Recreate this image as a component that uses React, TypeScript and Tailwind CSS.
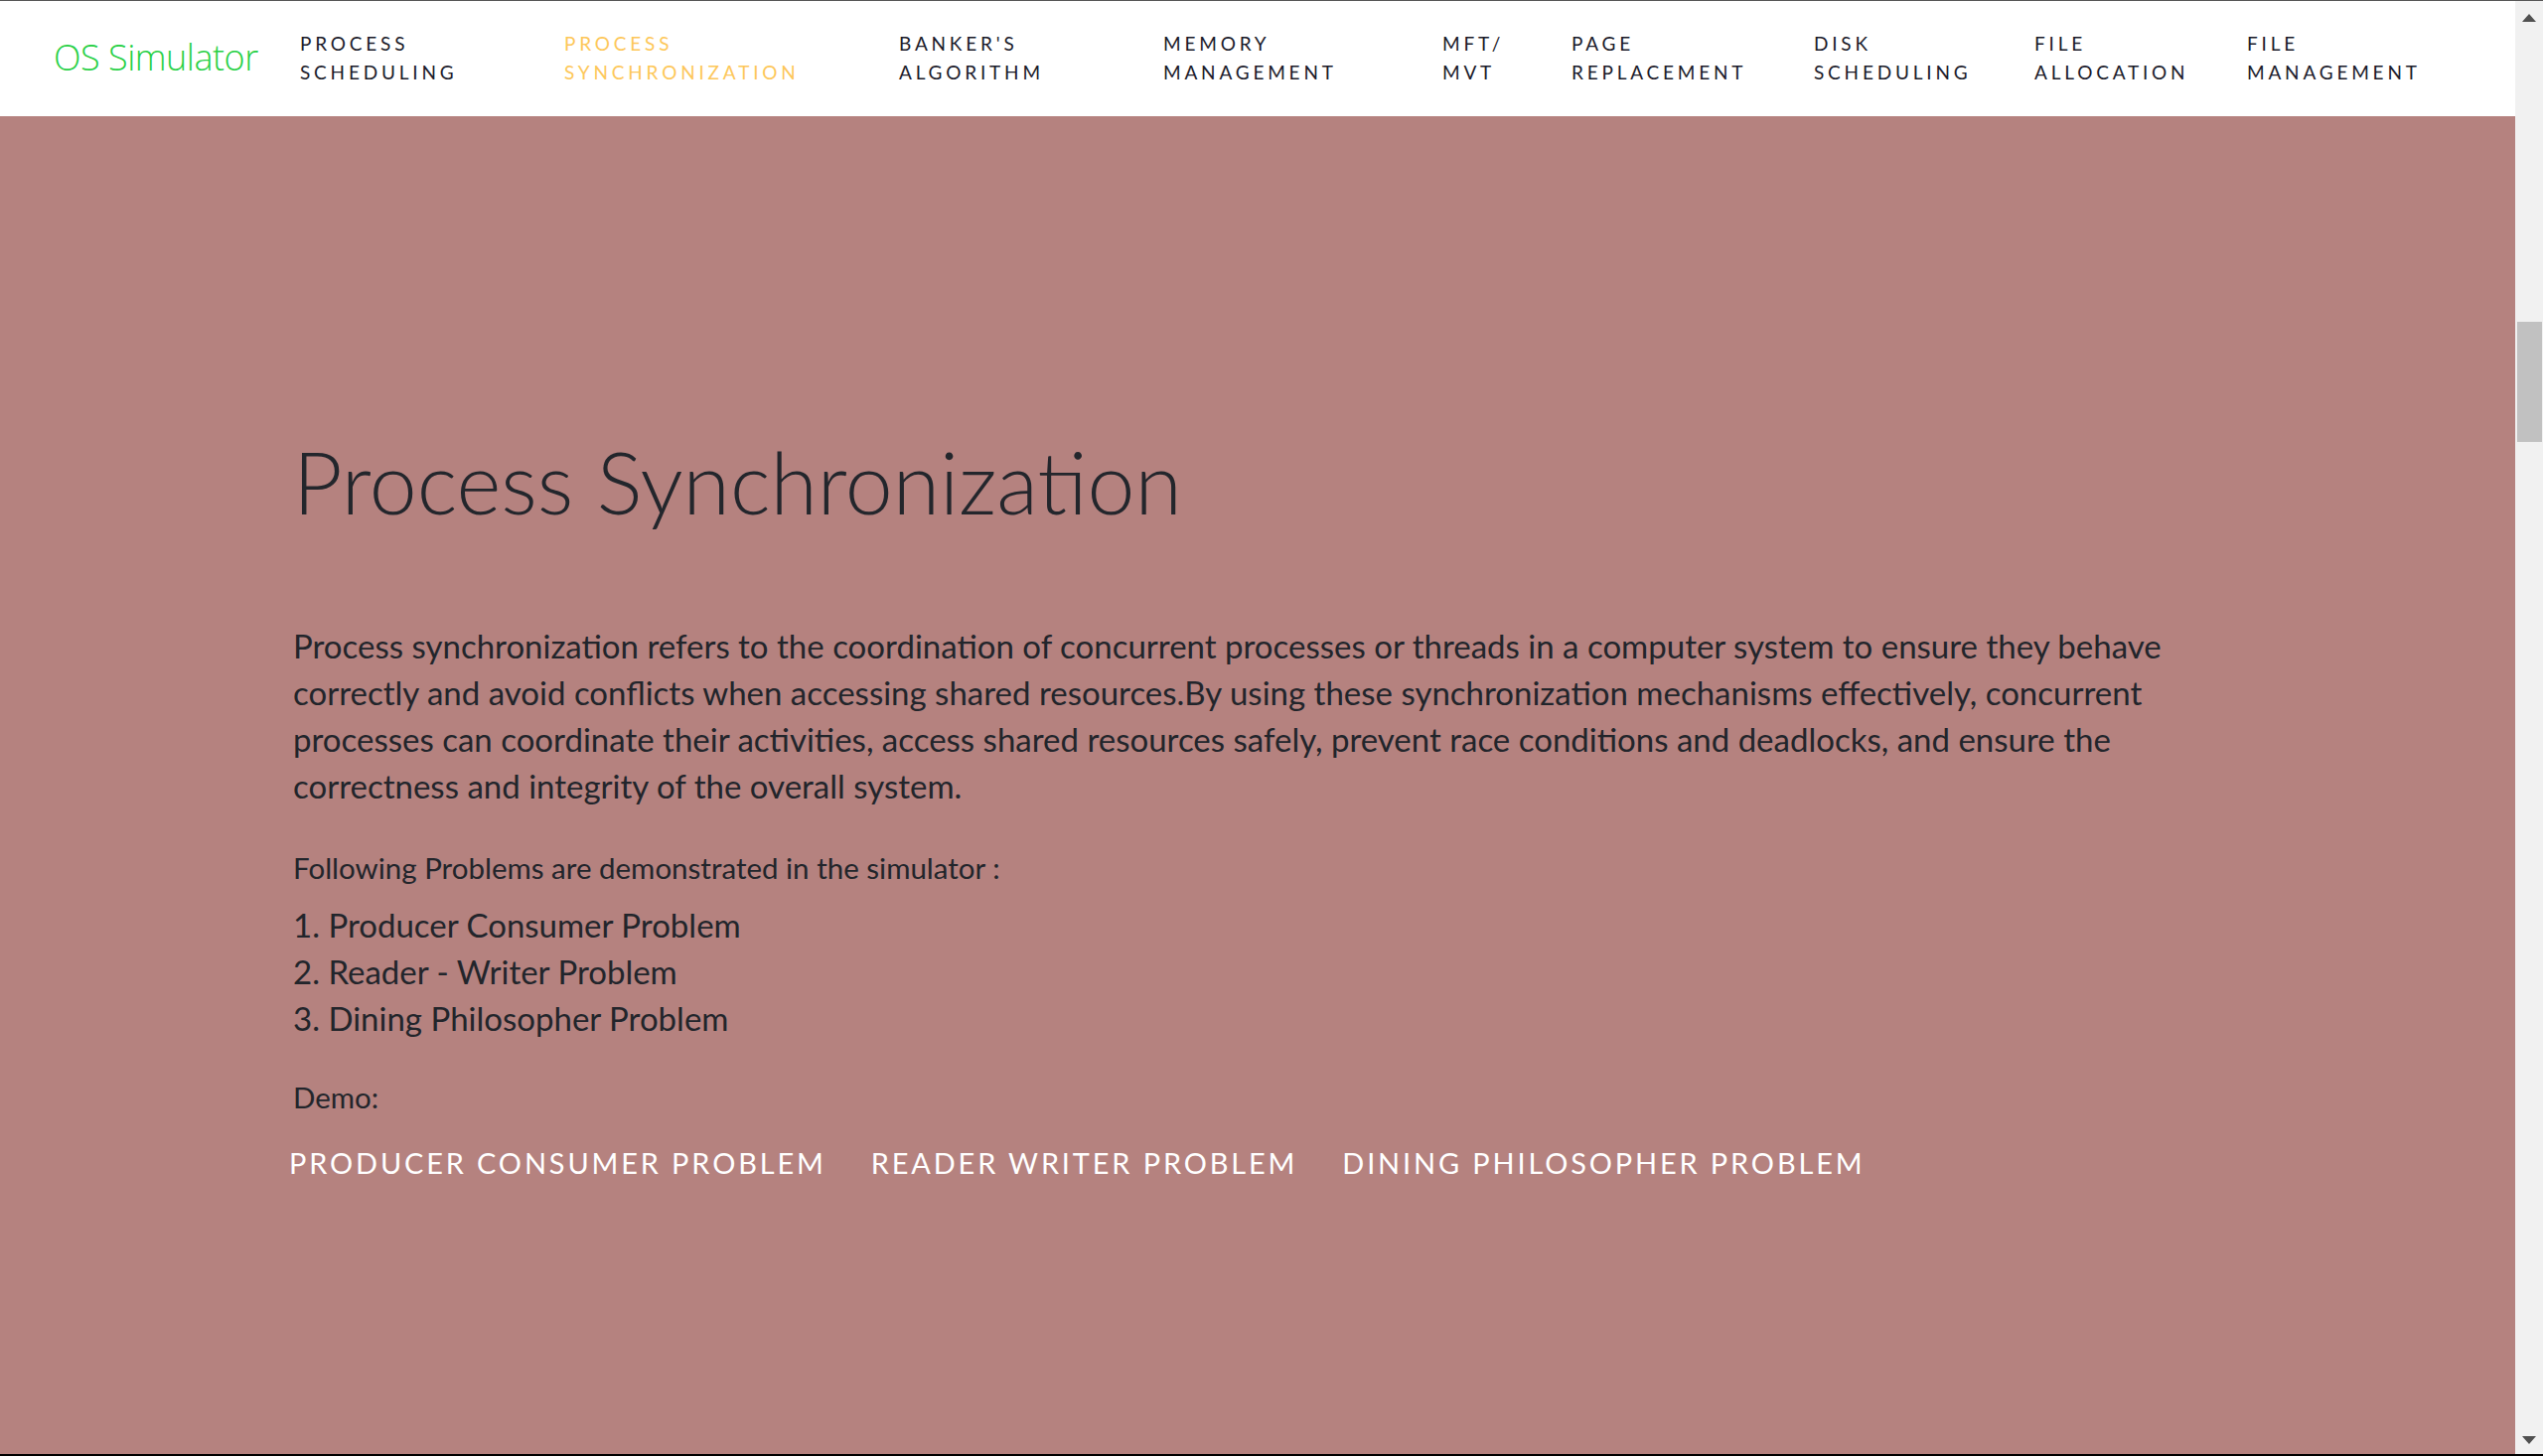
const NAV_ITEMS = [
  { top: "Process", bottom: "Scheduling", width: "w-[266px]" },
  { top: "Process", bottom: "Synchronization", width: "w-[337px]", active: true },
  { top: "Banker's", bottom: "Algorithm", width: "w-[266px]" },
  { top: "Memory", bottom: "Management", width: "w-[281px]" },
  { top: "MFT/", bottom: "MVT", width: "w-[130px]" },
  { top: "Page", bottom: "Replacement", width: "w-[244px]" },
  { top: "Disk", bottom: "Scheduling", width: "w-[222px]" },
  { top: "File", bottom: "Allocation", width: "w-[214px]" },
  { top: "File", bottom: "Management", width: "w-auto" },
];

const PROBLEMS = [
  "1. Producer Consumer Problem",
  "2. Reader - Writer Problem",
  "3. Dining Philosopher Problem",
];

const DEMOS = ["Producer Consumer Problem", "Reader Writer Problem", "Dining Philosopher Problem"];

function Navbar() {
  return (
    <nav className="h-[116px] bg-white flex items-center shrink-0">
      <a className="ml-[54px] w-[248px] text-[#27d045] text-[36px] font-light font-['Open_Sans',sans-serif] tracking-[-0.5px] -mt-[2px]">
        OS Simulator
      </a>
      <ul className="flex items-center -mt-[2px]">
        {NAV_ITEMS.map((item, i) => (
          <li
            key={i}
            className={`${item.width} uppercase text-[19px] leading-[29px] tracking-[0.2em] font-['Lato',sans-serif] ${
              item.active ? "text-[#fdc75a]" : "text-[#1b1b2a]"
            }`}
          >
            <div>{item.top}</div>
            <div>{item.bottom}</div>
          </li>
        ))}
      </ul>
    </nav>
  );
}

function Scrollbar() {
  return (
    <div className="w-[28px] bg-[#f1f1f1] flex flex-col items-center shrink-0">
      <svg width="14" height="8" viewBox="0 0 14 8" className="mt-[13px]">
        <path d="M0 8 L7 0 L14 8 Z" fill="#505050" />
      </svg>
      <div className="mt-[302px] ml-[1px] w-[25px] h-[121px] bg-[#c1c1c1]" />
      <div className="flex-1" />
      <svg width="14" height="8" viewBox="0 0 14 8" className="mb-[10px]">
        <path d="M0 0 L14 0 L7 8 Z" fill="#505050" />
      </svg>
    </div>
  );
}

export default function App() {
  return (
    <div className="h-screen w-full flex border-t border-[#555] border-b-2 border-b-black overflow-hidden">
      <div className="flex-1 flex flex-col bg-[#b5827f]">
        <Navbar />
        <main className="w-[1942px] mx-auto pt-[316px] text-[#22252b] font-['Lato',sans-serif]">
          <h1 className="text-[86px] leading-[1.2] font-light text-[#23262c]">Process Synchronization</h1>

          <p className="mt-[91px] text-[33px] leading-[47px]">
            Process synchronization refers to the coordination of concurrent processes or threads in a computer system
            to ensure they behave correctly and avoid conflicts when accessing shared resources.By using these
            synchronization mechanisms effectively, concurrent processes can coordinate their activities, access shared
            resources safely, prevent race conditions and deadlocks, and ensure the correctness and integrity of the
            overall system.
          </p>

          <p className="mt-[39px] text-[29.5px] leading-[40px]">Following Problems are demonstrated in the simulator :</p>

          <ul className="mt-[14px] text-[33px] leading-[47px]">
            {PROBLEMS.map((p) => (
              <li key={p}>{p}</li>
            ))}
          </ul>

          <p className="mt-[36px] text-[29.5px] leading-[40px]">Demo:</p>

          <div className="mt-[26px] -ml-[4px] flex gap-[45px]">
            {DEMOS.map((d) => (
              <button
                key={d}
                className="uppercase text-white text-[28.9px] leading-[40px] tracking-[0.1em] font-['Lato',sans-serif]"
              >
                {d}
              </button>
            ))}
          </div>
        </main>
      </div>
      <Scrollbar />
    </div>
  );
}
